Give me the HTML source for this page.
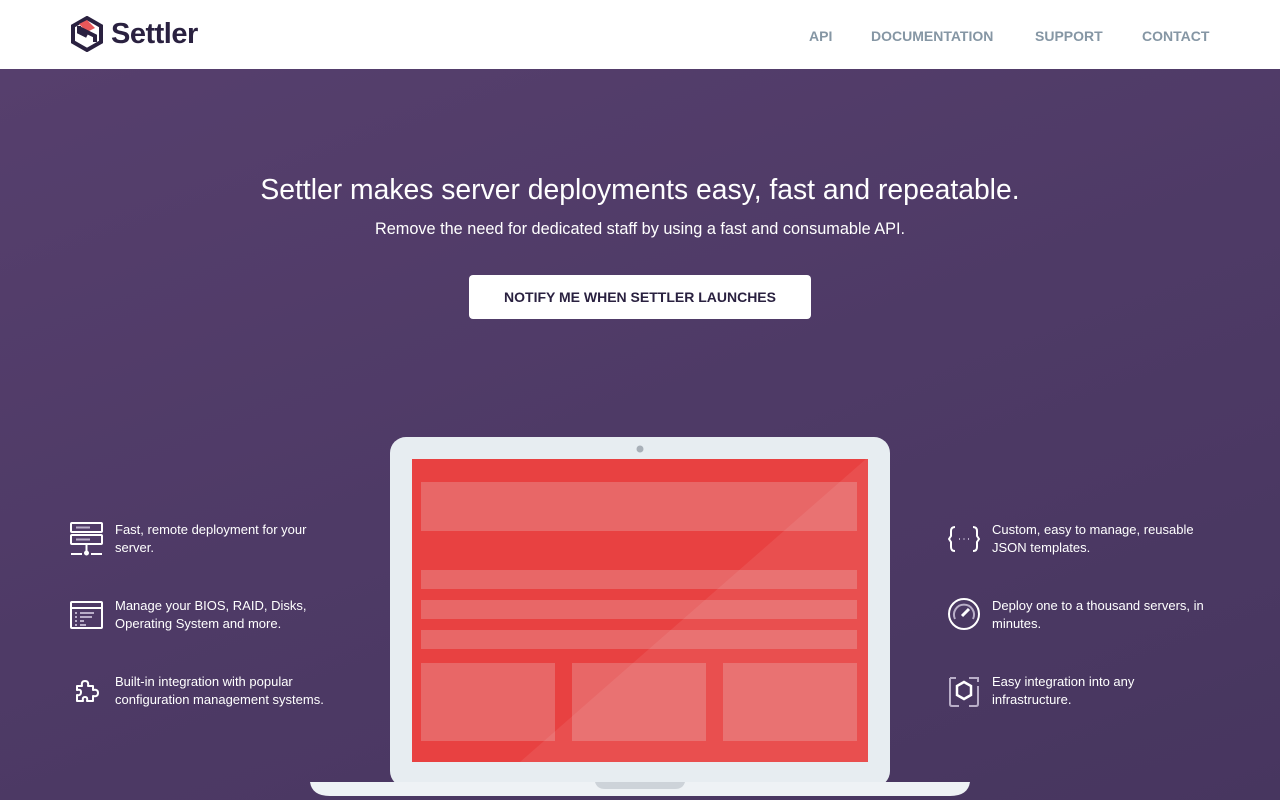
<!DOCTYPE html>
<html><head><meta charset="utf-8"><style>
*{margin:0;padding:0;box-sizing:border-box}
body{width:1280px;height:800px;overflow:hidden;font-family:"Liberation Sans",sans-serif;background:#4d3b66}
.hdr{position:absolute;left:0;top:0;width:1280px;height:69px;background:#fff}
.logo{position:absolute;left:70px;top:16px;display:flex;align-items:center}
.logo span{font-size:29px;font-weight:bold;color:#2a2140;margin-left:7px;letter-spacing:-0.5px}
.nav a{position:absolute;top:28px;font-size:14px;font-weight:bold;color:#8596a4;text-decoration:none}
.hero{position:absolute;left:0;top:69px;width:1280px;height:731px;background:linear-gradient(160deg,#563f6d 0%,#4e3a66 50%,#47365f 100%)}
h1{position:absolute;top:173px;width:1280px;text-align:center;color:#fff;font-weight:normal;font-size:28.3px}
.sub{position:absolute;top:220px;width:1280px;text-align:center;color:#fff;font-size:16.3px}
.btn{position:absolute;left:469px;top:275px;width:342px;height:44px;background:#fff;border-radius:4px;text-align:center;line-height:44px;font-size:14px;font-weight:bold;color:#2a2140}
.f{position:absolute;color:#fff;font-size:13px;line-height:18px}
.ic{position:absolute}
</style></head><body>
<div class="hdr">
 <div class="logo">
  <svg width="34" height="36" viewBox="0 0 34 36">
   <polygon points="17,2 31,10 31,26 17,34 3,26 3,10" fill="none" stroke="#2a2140" stroke-width="4"/>
   <polygon points="9,8 17,4 25,12 17,16" fill="#e8585a"/>
   <path d="M9,12 L25,20 L25,26" fill="none" stroke="#2a2140" stroke-width="4"/>
   <path d="M9,10 L9,16 L17,20" fill="none" stroke="#2a2140" stroke-width="4"/>
  </svg>
  <span>Settler</span>
 </div>
 <div class="nav">
  <a style="left:809px">API</a><a style="left:871px">DOCUMENTATION</a><a style="left:1035px">SUPPORT</a><a style="left:1142px">CONTACT</a>
 </div>
</div>
<div class="hero"></div>
<h1>Settler makes server deployments easy, fast and repeatable.</h1>
<div class="sub">Remove the need for dedicated staff by using a fast and consumable API.</div>
<div class="btn">NOTIFY ME WHEN SETTLER LAUNCHES</div>

<svg class="ic" style="left:300px;top:430px" width="680" height="370" viewBox="300 430 680 370">
 <rect x="390" y="437" width="500" height="350" rx="16" fill="#e7edf1"/>
 <circle cx="640" cy="449" r="3.5" fill="#a9b0b8"/>
 <path d="M310,782 H970 Q968,796 950,796 H330 Q312,796 310,782Z" fill="#eef2f5"/>
 <path d="M595,782 H685 Q683,789 675,789 H605 Q597,789 595,782Z" fill="#cdd3d9"/>
 <rect x="412" y="459" width="456" height="303" fill="#e84141"/>
 <g fill="#e86767">
  <rect x="421" y="482" width="436" height="49"/>
  <rect x="421" y="570" width="436" height="19"/>
  <rect x="421" y="600" width="436" height="19"/>
  <rect x="421" y="630" width="436" height="19"/>
  <rect x="421" y="663" width="134" height="78"/>
  <rect x="572" y="663" width="134" height="78"/>
  <rect x="723" y="663" width="134" height="78"/>
 </g>
 <polygon points="866,459 868,459 868,762 520,762" fill="#fff" opacity="0.08"/>
</svg>

<svg class="ic" style="left:70px;top:522px" width="34" height="34" viewBox="0 0 34 34" fill="none" stroke="#fff" stroke-width="2">
 <rect x="1" y="1" width="31" height="9" rx="1"/><rect x="1" y="13" width="31" height="9" rx="1"/>
 <path d="M16.5,22 V30 M1,32 H12 M21,32 H32" /><circle cx="16.5" cy="31" r="1.5" fill="#fff"/>
 <path d="M6,5.5 H20 M6,17.5 H20" stroke="#b9aec8"/>
</svg>
<svg class="ic" style="left:70px;top:601px" width="34" height="28" viewBox="0 0 34 28" fill="none" stroke="#fff" stroke-width="2">
 <rect x="1" y="1" width="31" height="26" rx="1"/><path d="M1,7 H32"/>
 <path d="M5,12 H7 M10,12 H24 M5,16 H7 M10,16 H22 M5,20 H7 M10,20 H14 M5,24 H7 M10,24 H16" stroke="#b9aec8"/>
</svg>
<svg class="ic" style="left:74px;top:678px" width="26" height="26" viewBox="0 0 26 26" fill="none" stroke="#fff" stroke-width="2" stroke-linejoin="round">
 <path d="M3,8 H8 Q7,3 11,3 Q15,3 14,8 H19 V12 Q24,11 24,15 Q24,19 19,18 V23 H13 Q14,19 11,19 Q8,19 9,23 H3 V17 Q7,18 7,14 Q7,11 3,12Z"/>
</svg>
<div class="f" style="left:115px;top:521px">Fast, remote deployment for your<br>server.</div>
<div class="f" style="left:115px;top:597px">Manage your BIOS, RAID, Disks,<br>Operating System and more.</div>
<div class="f" style="left:115px;top:673px">Built-in integration with popular<br>configuration management systems.</div>

<svg class="ic" style="left:948px;top:526px" width="32" height="26" viewBox="0 0 32 26" fill="none" stroke="#fff" stroke-width="2">
 <path d="M7,1 Q3,1 3,5 V10 L1,13 L3,16 V21 Q3,25 7,25 M25,1 Q29,1 29,5 V10 L31,13 L29,16 V21 Q29,25 25,25"/>
 <path d="M11,13 H12 M15.5,13 H16.5 M20,13 H21" stroke="#b9aec8"/>
</svg>
<svg class="ic" style="left:947px;top:597px" width="34" height="34" viewBox="0 0 34 34" fill="none" stroke="#fff" stroke-width="2">
 <circle cx="17" cy="17" r="15"/><path d="M8,22 A10,10 0 1 1 26,22" stroke="#b9aec8"/>
 <path d="M15,19 L22,12" stroke-width="3"/>
</svg>
<svg class="ic" style="left:947px;top:674px" width="34" height="34" viewBox="0 0 34 34" fill="none" stroke="#b9aec8" stroke-width="2">
 <path d="M3,4 V30 Q3,32 5,32 H12 M3,4 H9 M31,12 V30 Q31,32 29,32 H22 M22,4 H31 V8"/>
 <polygon points="17,8 24,12 24,21 17,25 10,21 10,12" stroke="#fff" stroke-width="2.5"/>
</svg>
<div class="f" style="left:992px;top:521px">Custom, easy to manage, reusable<br>JSON templates.</div>
<div class="f" style="left:992px;top:597px">Deploy one to a thousand servers, in<br>minutes.</div>
<div class="f" style="left:992px;top:673px">Easy integration into any<br>infrastructure.</div>
</body></html>
